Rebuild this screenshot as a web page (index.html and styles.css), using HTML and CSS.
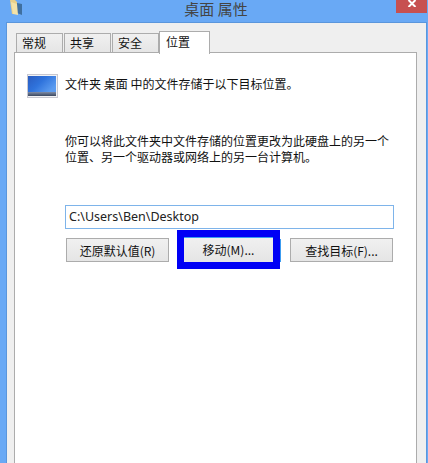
FILE: index.html
```html
<!DOCTYPE html>
<html lang="zh-CN">
<head>
    <meta charset="UTF-8">
    <title>桌面 属性</title>
    <link rel="stylesheet" href="styles.css">
</head>
<body>
    <div class="titlebar">
        <svg class="folder-icon" width="14" height="16" viewBox="0 0 14 16">
            <path d="M0 0h5l2 2v12H2z" fill="#e8cf8a"/>
            <path d="M7 3l5 1v11l-5-2z" fill="#3f6f9f"/>
            <path d="M1 2l6 2 1 11-5-1z" fill="#f3e2a8"/>
        </svg>
        <div class="title">桌面 属性</div>
        <div class="close">
            <svg width="10" height="7" viewBox="0 0 10 7">
                <path d="M1.500 0L8.500 7M8.500 0L1.500 7" stroke="#fff" stroke-width="2" fill="none"/>
            </svg>
        </div>
    </div>
    <div class="dialog">
        <div class="tabs">
            <div class="tab">常规</div>
            <div class="tab">共享</div>
            <div class="tab">安全</div>
            <div class="tab active">位置</div>
        </div>
        <div class="pane">
            <div class="intro">
                <svg class="desktop-icon" width="31" height="24" viewBox="0 0 31 24">
                    <defs>
                        <linearGradient id="screen" x1="0" y1="0" x2="1" y2="0.600">
                            <stop offset="0" stop-color="#2a5cc0"/>
                            <stop offset="0.500" stop-color="#2f73dc"/>
                            <stop offset="1" stop-color="#5c9cf0"/>
                        </linearGradient>
                        <linearGradient id="band" x1="0" y1="0" x2="0" y2="1">
                            <stop offset="0" stop-color="#7f8ca6"/>
                            <stop offset="1" stop-color="#3a4860"/>
                        </linearGradient>
                    </defs>
                    <rect x="0.500" y="0.500" width="30" height="23" fill="#f2f2f4" stroke="#c8c8d0"/>
                    <rect x="1" y="2" width="28" height="16" fill="url(#screen)"/>
                    <rect x="1" y="18" width="28" height="4" fill="url(#band)"/>
                </svg>
                <div>文件夹 桌面 中的文件存储于以下目标位置。</div>
            </div>
            <p class="desc">你可以将此文件夹中文件存储的位置更改为此硬盘上的另一个<br>位置、另一个驱动器或网络上的另一台计算机。</p>
            <div class="path">C:\Users\Ben\Desktop</div>
            <div class="buttons">
                <div class="btn">还原默认值(R)</div>
                <div class="btn-mark"><div class="btn focus">移动(M)...</div></div>
                <div class="btn">查找目标(F)...</div>
            </div>
        </div>
    </div>
</body>
</html>
```

FILE: styles.css
```css
html, body {
    margin: 0;
    height: 100%;
}
body {
    width: 428px;
    height: 463px;
    overflow: hidden;
    background-color: #69a9f5;
    font-family: "Noto Sans CJK SC", "Liberation Sans", sans-serif;
    font-size: 12px;
    color: #111;
    display: flex;
    flex-direction: column;
}
.titlebar {
    height: 22px;
    display: flex;
    justify-content: space-between;
    align-items: flex-start;
    padding: 0 1px 0 10px;
}
.folder-icon {
    display: block;
}
.title {
    font-size: 15px;
    line-height: 18px;
    color: #444;
    margin-left: 12px;
}
.close {
    width: 31px;
    height: 13px;
    background-color: #c75050;
    display: flex;
    justify-content: center;
    align-items: flex-start;
}
.dialog {
    flex: 1;
    margin: 0 1px 0 6px;
    padding: 8px 9px 0 7px;
    background-color: #efefef;
    border: 1px solid #5a96dc;
    border-bottom: none;
    display: flex;
    flex-direction: column;
}
.tabs {
    display: flex;
    height: 22px;
    padding-left: 2px;
    gap: 1px;
    margin-bottom: -1px;
}
.tab {
    width: 47px;
    height: 20px;
    margin-top: 2px;
    padding-left: 5px;
    box-sizing: border-box;
    border: 1px solid #acacac;
    border-bottom: none;
    background: linear-gradient(#f0f0f0, #e5e5e5);
    line-height: 18px;
    font-size: 12px;
}
.tab.active {
    position: relative;
    width: 51px;
    height: 23px;
    margin-top: 0;
    margin-left: -1px;
    padding-left: 6px;
    background: #fff;
    line-height: 20px;
    z-index: 1;
}
.pane {
    flex: 1;
    background-color: #fff;
    border: 1px solid #acacac;
    border-bottom: none;
    padding: 21px 22px 0 12px;
}
.intro {
    display: flex;
    align-items: flex-start;
    gap: 7px;
    height: 24px;
    line-height: 19px;
}
.desktop-icon {
    display: block;
    flex: none;
}
.desc {
    margin: 35px 0 0 38px;
    line-height: 16px;
    white-space: nowrap;
}
.path {
    margin: 40px 0 0 38px;
    height: 22px;
    border: 1px solid #7eb4ea;
    padding-left: 3px;
    line-height: 21px;
    font-family: "Noto Sans", "Liberation Sans", sans-serif;
    font-size: 12.500px;
    color: #222;
}
.buttons {
    display: flex;
    justify-content: space-between;
    align-items: center;
    margin: 1px 1px 0 39px;
}
.btn {
    width: 103px;
    height: 24px;
    box-sizing: border-box;
    border: 1px solid #acacac;
    background: linear-gradient(#f0f0f0, #e5e5e5);
    text-align: center;
    line-height: 23px;
}
.btn-mark {
    position: relative;
    margin-left: -2px;
    border: 7px solid #0000f5;
    display: flex;
}
.btn-mark::after {
    content: "";
    position: absolute;
    top: 2px;
    bottom: 0;
    right: -8px;
    width: 1px;
    background-color: #3c9cf0;
}
.btn.focus {
    width: 89px;
    height: 25px;
    border: none;
    border-top: 1px solid #3c9cf0;
}
```
